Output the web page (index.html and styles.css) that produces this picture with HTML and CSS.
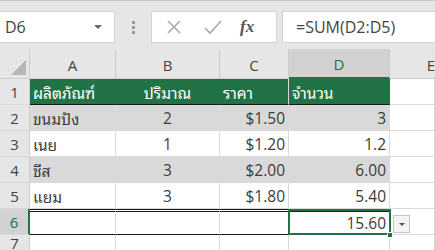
FILE: index.html
```html
<!DOCTYPE html>
<html>
<head>
<meta charset="utf-8">
<link rel="stylesheet" href="styles.css">
</head>
<body>
<div class="toolbar">
  <div class="namebox"><span class="nb-text">D6</span><span class="nb-arrow"></span></div>
  <div class="grip"><i></i><i></i><i></i></div>
  <div class="fbtns">
    <svg class="ic-x" width="16" height="16" viewBox="0 0 16 16"><path d="M2 2 L14 14 M14 2 L2 14" stroke="#a8a8a8" stroke-width="1.6" fill="none"/></svg>
    <svg class="ic-check" width="18" height="16" viewBox="0 0 18 16"><path d="M1 9 L6 14 L17 2" stroke="#a8a8a8" stroke-width="1.6" fill="none"/></svg>
    <span class="fx">fx</span>
  </div>
  <div class="formula">=SUM(D2:D5)</div>
</div>
<div class="sheet">
  <div class="ch corner"><span class="tri"></span></div>
  <div class="ch">A</div>
  <div class="ch">B</div>
  <div class="ch">C</div>
  <div class="ch ch-sel">D</div>
  <div class="ch ch-e">E</div>

  <div class="rh">1</div>
  <div class="c hd">ผลิตภัณฑ์</div>
  <div class="c hd ctr">ปริมาณ</div>
  <div class="c hd">ราคา</div>
  <div class="c hd">จำนวน</div>
  <div class="c e"></div>

  <div class="rh">2</div>
  <div class="c band">ขนมปัง</div>
  <div class="c band ctr">2</div>
  <div class="c band num">$1.50</div>
  <div class="c band num">3</div>
  <div class="c e"></div>

  <div class="rh">3</div>
  <div class="c">เนย</div>
  <div class="c ctr">1</div>
  <div class="c num">$1.20</div>
  <div class="c num">1.2</div>
  <div class="c e"></div>

  <div class="rh">4</div>
  <div class="c band">ชีส</div>
  <div class="c band ctr">3</div>
  <div class="c band num">$2.00</div>
  <div class="c band num">6.00</div>
  <div class="c e"></div>

  <div class="rh">5</div>
  <div class="c">แยม</div>
  <div class="c ctr">3</div>
  <div class="c num">$1.80</div>
  <div class="c num">5.40</div>
  <div class="c e"></div>

  <div class="rh rh-sel">6</div>
  <div class="c tot"></div>
  <div class="c tot"></div>
  <div class="c tot"></div>
  <div class="c tot num sel">15.60<span class="handle"></span><span class="qa"><span class="qa-arrow"></span></span></div>
  <div class="c e"></div>

  <div class="rh rh-last">7</div>
  <div class="c"></div>
  <div class="c"></div>
  <div class="c"></div>
  <div class="c"></div>
  <div class="c e"></div>
</div>
</body>
</html>
```

FILE: styles.css
```css
* { box-sizing: border-box; }
html, body {
  margin: 0;
  padding: 0;
  width: 435px;
  height: 250px;
  overflow: hidden;
  background: #ffffff;
  font-family: "Open Sans", "Noto Sans Thai Looped", "Noto Sans", "Noto Sans Thai", sans-serif;
  color: #3a3a3a;
}
.toolbar {
  height: 49px;
  background: #e6e6e6;
  border-top: 1px solid #c8c8c8;
  display: flex;
  align-items: flex-start;
  padding-top: 10px;
}
.namebox {
  width: 115px;
  height: 32px;
  background: #fff;
  border: 1px solid #d4d4d4;
  border-left: none;
  display: flex;
  align-items: center;
  justify-content: space-between;
  padding: 0 12px 0 5px;
  font-size: 16px;
  color: #444;
}
.nb-arrow {
  width: 0;
  height: 0;
  border-left: 4px solid transparent;
  border-right: 4px solid transparent;
  border-top: 4px solid #666;
}
.grip {
  width: 36px;
  height: 32px;
  display: flex;
  flex-direction: column;
  align-items: center;
  justify-content: center;
  gap: 2px;
}
.grip i {
  display: block;
  width: 3px;
  height: 3px;
  background: #9a9a9a;
}
.fbtns {
  width: 126px;
  height: 32px;
  background: #fff;
  border: 1px solid #d4d4d4;
  display: flex;
  align-items: center;
  padding-left: 14px;
}
.ic-x { margin-right: 22px; }
.ic-check { margin-right: 18px; }
.fx {
  font-family: "Liberation Serif", serif;
  font-style: italic;
  font-weight: bold;
  font-size: 17px;
  color: #555;
}
.formula {
  flex: 1;
  height: 32px;
  margin-left: 5px;
  background: #fff;
  border: 1px solid #d4d4d4;
  border-right: none;
  display: flex;
  align-items: center;
  padding-left: 13px;
  font-size: 16px;
  color: #444;
}
.sheet {
  display: grid;
  grid-template-columns: 30px 86px 104px 69px 101px 1fr;
  grid-template-rows: 30px repeat(7, 26px);
}
.ch {
  background: #e6e6e6;
  border-right: 1px solid #cdcdcd;
  border-bottom: 1px solid #cdcdcd;
  display: flex;
  align-items: center;
  justify-content: center;
  font-size: 15px;
  color: #444;
  padding-top: 2px;
}
.corner {
  position: relative;
  border-right: 1px solid #cdcdcd;
}
.tri {
  position: absolute;
  right: 3px;
  bottom: 3px;
  width: 0;
  height: 0;
  border-left: 15px solid transparent;
  border-bottom: 15px solid #b5b5b5;
}
.ch-sel {
  background: #d2d2d2;
  border-bottom: 2px solid #217346;
  color: #217346;
}
.ch-e {
  justify-content: flex-end;
  padding-right: 0;
  border-right: none;
}
.rh {
  background: #e6e6e6;
  border-right: 1px solid #cdcdcd;
  border-bottom: 1px solid #d8d8d8;
  display: flex;
  align-items: center;
  justify-content: center;
  font-size: 15px;
  color: #444;
}
.rh-last {
  align-items: flex-start;
  padding-top: 1px;
  line-height: 14px;
}
.rh-sel {
  background: #d2d2d2;
  border-right: 2px solid #217346;
  color: #217346;
}
.c {
  border-right: 1px solid #dadada;
  border-bottom: 1px solid #dadada;
  display: flex;
  align-items: center;
  padding: 0 3px 0 3px;
  font-size: 15.5px;
  color: #3c3c3c;
  white-space: nowrap;
  position: relative;
}
.ctr { justify-content: center; }
.num { justify-content: flex-end; }
.hd {
  background: #217346;
  color: #fff;
  border-right-color: #217346;
  border-bottom: 1px solid #1a1a1a;
}
.hd:nth-child(10) { border-right-color: #dadada; }
.band {
  background: #d9d9d9;
  border-right-color: #d9d9d9;
  border-bottom-color: #d9d9d9;
}
.e {
  border-right: 1px solid #d4d4d4;
}
.tot {
  border-top: 3px double #1a1a1a;
  border-bottom: 1px solid #1a1a1a;
}
.sel {
  overflow: visible;
  z-index: 2;
}
.sel::after {
  content: "";
  position: absolute;
  left: -1px;
  top: -3px;
  right: -2px;
  bottom: -1px;
  border: 2px solid #217346;
}
.handle {
  position: absolute;
  right: -4px;
  bottom: -4px;
  width: 6px;
  height: 6px;
  background: #217346;
  border: 1px solid #fff;
  z-index: 3;
}
.qa {
  position: absolute;
  left: 104px;
  top: 3px;
  width: 17px;
  height: 18px;
  background: #f3f3f3;
  border: 1px solid #c6c6c6;
  display: flex;
  align-items: center;
  justify-content: center;
}
.qa-arrow {
  width: 0;
  height: 0;
  border-left: 3px solid transparent;
  border-right: 3px solid transparent;
  border-top: 3px solid #555;
}
```
